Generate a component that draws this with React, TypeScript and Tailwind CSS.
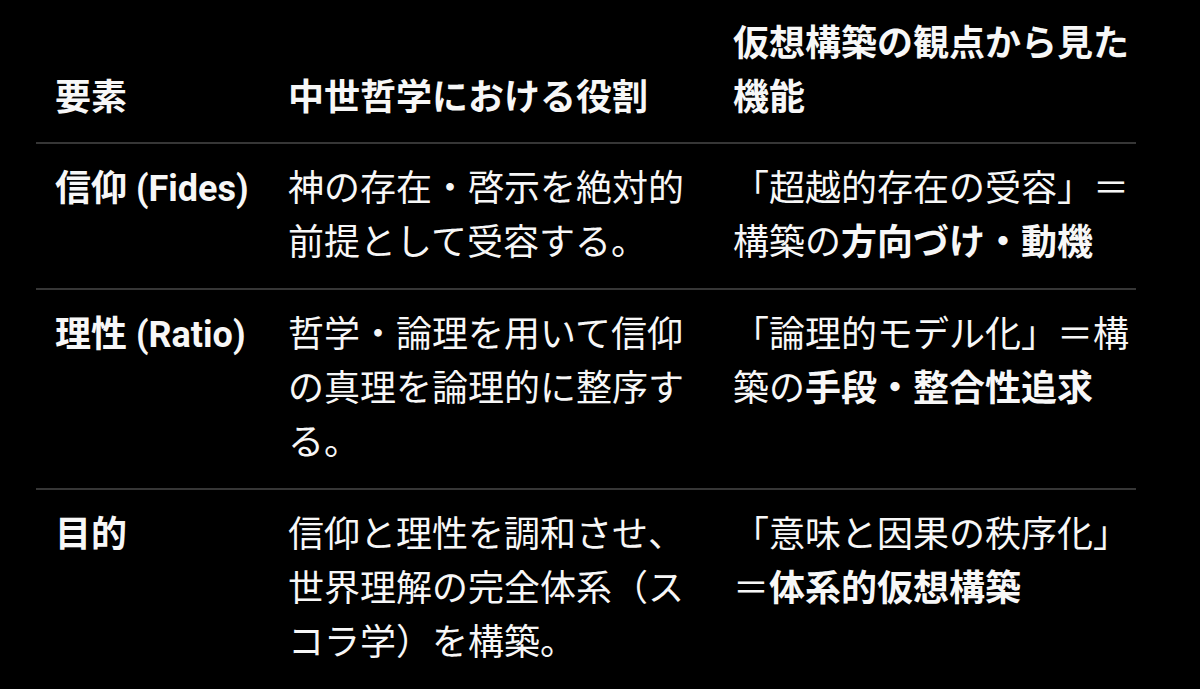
import type { ReactNode } from "react";

type Row = {
  element: string;
  role: string;
  func: ReactNode;
};

const rows: Row[] = [
  {
    element: "信仰 (Fides)",
    role: "神の存在・啓示を絶対的前提として受容する。",
    func: (
      <>
        「超越的存在の受容」＝構築の<b className="font-bold">方向づけ・動機</b>
      </>
    ),
  },
  {
    element: "理性 (Ratio)",
    role: "哲学・論理を用いて信仰の真理を論理的に整序する。",
    func: (
      <>
        「論理的モデル化」＝構築の<b className="font-bold">手段・整合性追求</b>
      </>
    ),
  },
  {
    element: "目的",
    role: "信仰と理性を調和させ、世界理解の完全体系（スコラ学）を構築。",
    func: (
      <>
        「意味と因果の秩序化」＝<b className="font-bold">体系的仮想構築</b>
      </>
    ),
  },
];

export default function App() {
  return (
    <div
      className="min-h-screen bg-black text-[#f7f7f7] pt-[17px] pl-[36px] text-[36px] leading-[54px]"
      style={{ fontFamily: 'Roboto, "Noto Sans CJK JP", sans-serif' }}
    >
      <div className="w-[1100px]">
        {/* Header */}
        <div className="grid grid-cols-[233px_445px_422px] items-end border-b-2 border-[#363636] font-bold">
          <div className="pl-[19px] pb-[17px]">要素</div>
          <div className="pl-[19px] pr-[19px] pb-[17px]">中世哲学における役割</div>
          <div className="pl-[19px] pb-[17px]">仮想構築の観点から見た機能</div>
        </div>

        {/* Body */}
        {rows.map((row, i) => (
          <div
            key={row.element}
            className={`grid grid-cols-[233px_445px_422px] items-start ${
              i < rows.length - 1 ? "border-b-2 border-[#363636]" : ""
            }`}
          >
            <div className="pl-[19px] py-[18px] font-bold whitespace-nowrap">{row.element}</div>
            <div className="pl-[19px] pr-[19px] py-[18px] font-normal">{row.role}</div>
            <div className="pl-[19px] py-[18px] font-normal">{row.func}</div>
          </div>
        ))}
      </div>
    </div>
  );
}
